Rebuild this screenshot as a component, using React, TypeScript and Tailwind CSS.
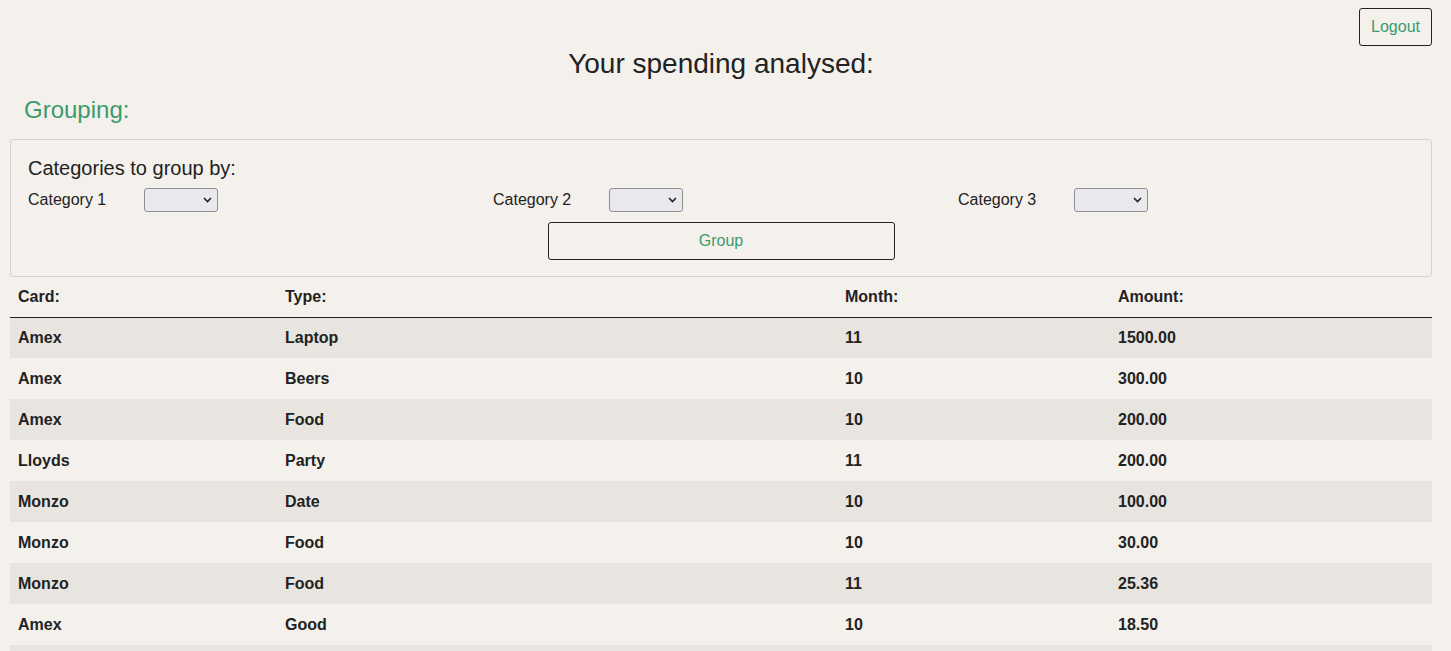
const ROWS = [
  ["Amex", "Laptop", "11", "1500.00"],
  ["Amex", "Beers", "10", "300.00"],
  ["Amex", "Food", "10", "200.00"],
  ["Lloyds", "Party", "11", "200.00"],
  ["Monzo", "Date", "10", "100.00"],
  ["Monzo", "Food", "10", "30.00"],
  ["Monzo", "Food", "11", "25.36"],
  ["Amex", "Good", "10", "18.50"],
  ["Lloyds", "Food", "11", "12.00"],
];

export default function App() {
  return (
    <main
      className="min-h-screen bg-[#f4f1ec] text-[#222222] pl-[10px] pr-[19px] pt-2 pb-8"
      style={{ fontFamily: '"Liberation Sans", Arial, sans-serif' }}
    >
      <div className="flex justify-end">
        <button className="h-[38px] px-[11px] border border-[#222] rounded-[3px] text-[#3a9b6d] text-[16px]">
          Logout
        </button>
      </div>
      <h1 className="text-center text-[28px] leading-[34px] mt-px">Your spending analysed:</h1>
      <h2 className="text-[#3a9b6d] text-[24px] leading-[30px] mt-[14px] ml-[14px]">Grouping:</h2>

      {/* grouping controls */}
      <div className="mt-[14px] border border-[#d6d3cf] rounded-[3px] px-[17px] pt-[16px] pb-[16px]">
        <p className="text-[20px] leading-[24px]">Categories to group by:</p>
        <div className="grid grid-cols-[465px_465px_1fr] mt-[8px]">
          {["Category 1", "Category 2", "Category 3"].map((c) => (
            <div key={c} className="flex items-center">
              <span className="w-[116px] text-[16px]">{c}</span>
              <div className="w-[74px] h-[24px] bg-[#e9e8ed] border border-[#8f8f95] rounded-[3px] flex items-center justify-end pr-[5px]">
                <svg width="9" height="6" viewBox="0 0 9 6" fill="none">
                  <path d="M1 1l3.5 3.5L8 1" stroke="#222" strokeWidth="1.6" />
                </svg>
              </div>
            </div>
          ))}
        </div>
        <div className="flex justify-center mt-[10px]">
          <button className="w-[347px] h-[38px] border border-[#222] rounded-[3px] text-[#3a9b6d] text-[16px]">
            Group
          </button>
        </div>
      </div>

      {/* results */}
      <table className="w-full border-collapse text-[16px] font-bold">
        <thead>
          <tr className="h-[40px] border-b border-[#222]">
            <th className="w-[267px] text-left pl-[8px] font-bold">Card:</th>
            <th className="w-[560px] text-left pl-[8px] font-bold">Type:</th>
            <th className="w-[273px] text-left pl-[8px] font-bold">Month:</th>
            <th className="text-left pl-[8px] font-bold">Amount:</th>
          </tr>
        </thead>
        <tbody>
          {ROWS.map((r, i) => (
            <tr key={i} className={`h-[41px] ${i % 2 === 0 ? "bg-[#e8e5e0]" : ""}`}>
              {r.map((c, j) => (
                <td key={j} className="pl-[8px]">
                  {c}
                </td>
              ))}
            </tr>
          ))}
        </tbody>
      </table>
    </main>
  );
}
